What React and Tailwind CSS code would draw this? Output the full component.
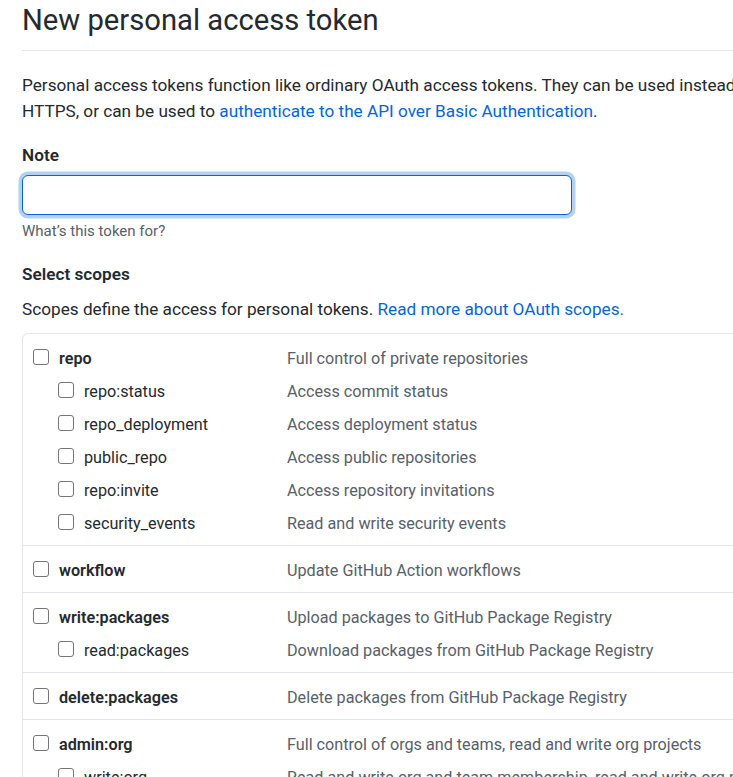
import React from "react";

const font = { fontFamily: "Roboto, 'Noto Sans', sans-serif" };

function Box() {
  return (
    <span className="block w-[16px] h-[16px] shrink-0 rounded-[3px] border border-[#767676] bg-white" />
  );
}

function Row({ name, desc, sub }) {
  return (
    <div className="flex h-[33px] items-center">
      <div
        className={
          "flex w-[264px] shrink-0 items-center gap-[10px] " +
          (sub ? "pl-[35px]" : "pl-[10px]")
        }
      >
        <Box />
        <span
          className={
            sub
              ? "pt-[3px] text-[16.2px] text-[#24292e]"
              : "pt-[3px] text-[16.2px] font-semibold text-[#24292e]"
          }
        >
          {name}
        </span>
      </div>
      <span className="pt-[3px] whitespace-nowrap text-[16.2px] text-[#586069]">{desc}</span>
    </div>
  );
}

const groups = [
  [
    ["repo", "Full control of private repositories"],
    ["repo:status", "Access commit status", true],
    ["repo_deployment", "Access deployment status", true],
    ["public_repo", "Access public repositories", true],
    ["repo:invite", "Access repository invitations", true],
    ["security_events", "Read and write security events", true],
  ],
  [["workflow", "Update GitHub Action workflows"]],
  [
    ["write:packages", "Upload packages to GitHub Package Registry"],
    ["read:packages", "Download packages from GitHub Package Registry", true],
  ],
  [["delete:packages", "Delete packages from GitHub Package Registry"]],
  [
    ["admin:org", "Full control of orgs and teams, read and write org projects"],
    ["write:org", "Read and write org and team membership, read and write org projects", true],
    ["read:org", "Read org and team membership, read org projects", true],
  ],
];

export default function App() {
  return (
    <div className="w-[733px] h-[777px] overflow-hidden bg-white text-[#24292e]" style={font}>
      <div className="w-[1000px] pl-[22px]">
        <div className="border-b border-[#e1e4e8] pb-[10px]">
          <h2 className="text-[29.2px] leading-[40px] font-normal text-[#24292e]">
            New personal access token
          </h2>
        </div>
        <p className="mt-[21px] whitespace-nowrap text-[17.2px] leading-[26px]">
          Personal access tokens function like ordinary OAuth access tokens. They can be used instead of a password for Git over
          <br />
          HTTPS, or can be used to{" "}
          <a className="text-[#0366d6]">authenticate to the API over Basic Authentication</a>.
        </p>
        <div className="mt-[18px] text-[17.2px] leading-[26px] font-semibold">Note</div>
        <input
          className="mt-[7px] block h-[40px] w-[550px] rounded-[6px] border border-[#0366d6] bg-white px-[10px] text-[17.5px] outline-none shadow-[0_0_0_3.5px_rgba(3,102,214,0.3)]"
        />
        <div className="mt-[6px] text-[15px] leading-[20px] text-[#586069]">What’s this token for?</div>
        <div className="mt-[20px] text-[17.2px] leading-[26px] font-semibold">Select scopes</div>
        <p className="mt-[9px] whitespace-nowrap text-[17.2px] leading-[26px]">
          Scopes define the access for personal tokens.{" "}
          <a className="text-[#0366d6]">Read more about OAuth scopes.</a>
        </p>
        <div className="mt-[11px] rounded-[6px] border border-[#e1e4e8]">
          {groups.map((g, i) => (
            <div
              key={i}
              className={"pt-[7px] pb-[6px] " + (i > 0 ? "border-t border-[#e1e4e8]" : "")}
            >
              {g.map(([n, d, s]) => (
                <Row key={n} name={n} desc={d} sub={s} />
              ))}
            </div>
          ))}
        </div>
      </div>
    </div>
  );
}
